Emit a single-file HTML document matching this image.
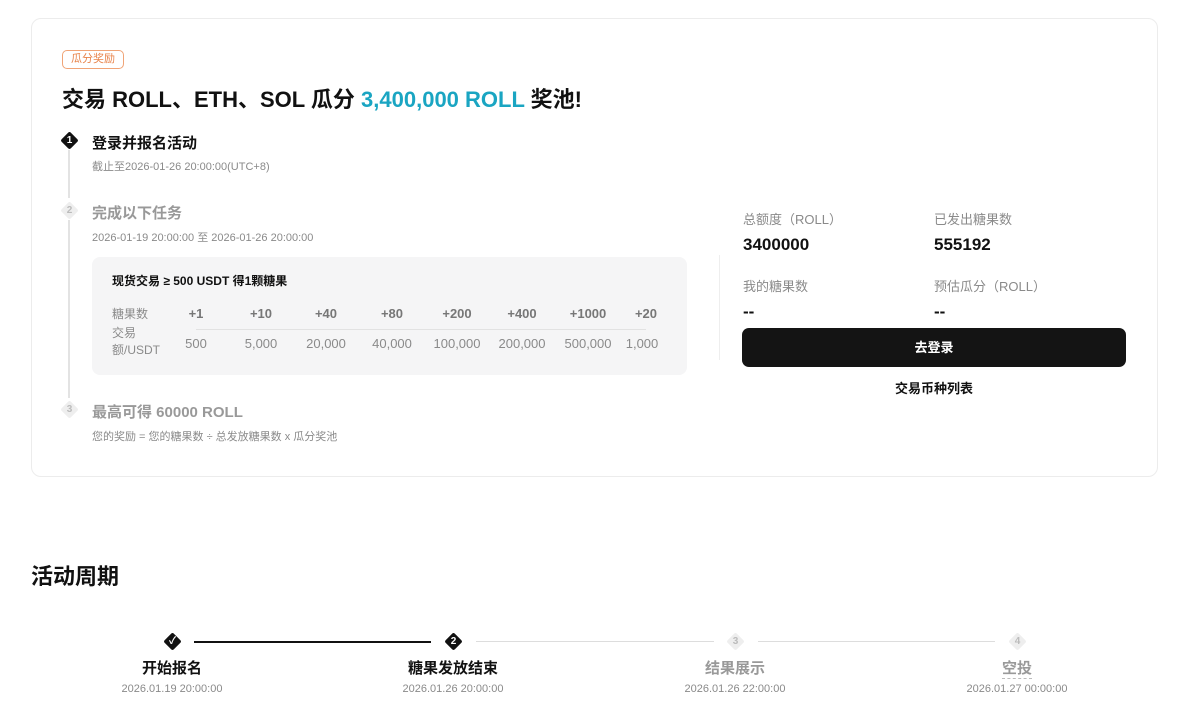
<!DOCTYPE html>
<html><head><meta charset="utf-8"><style>
*{margin:0;padding:0;box-sizing:border-box}
body{width:1199px;height:727px;background:#fff;position:relative;overflow:hidden;font-family:"Liberation Sans","Noto Sans CJK SC",sans-serif;color:#111}
.a{position:absolute;white-space:nowrap}
.card{position:absolute;left:31px;top:18px;width:1127px;height:459px;border:1px solid #ececec;border-radius:10px}
.g{color:#8a8a8a}
.dia{position:absolute;width:13px;height:13px;transform:rotate(45deg);border-radius:2px}
.dn{position:absolute;width:13px;height:13px;color:#fff;font-size:10px;font-weight:bold;text-align:center;line-height:13px}
.c{transform:translateX(-50%)}
</style></head><body>
<div class="card"></div>
<div class="a" style="left:62px;top:50px;height:19px;width:62px;border:1px solid #f0a477;border-radius:5px;color:#e8834a;font-size:11px;line-height:17px;text-align:center">瓜分奖励</div>
<div class="a" style="left:62px;top:82px;font-size:22px;font-weight:bold">交易 ROLL、ETH、SOL 瓜分 <span style="color:#1aa5c2">3,400,000 ROLL</span> 奖池!</div>

<div style="position:absolute;left:68px;top:150px;width:2px;height:48px;background:#e3e3e3"></div>
<div style="position:absolute;left:68px;top:220px;width:2px;height:178px;background:#e3e3e3"></div>
<div class="dia" style="left:63px;top:134px;background:#111"></div><div class="dn" style="left:63px;top:134px">1</div>
<div class="dia" style="left:63px;top:204px;background:#eee"></div><div class="dn" style="left:63px;top:204px;color:#bbb">2</div>
<div class="dia" style="left:63px;top:403px;background:#eee"></div><div class="dn" style="left:63px;top:403px;color:#bbb">3</div>

<div class="a" style="left:92px;top:132px;font-size:15px;font-weight:bold">登录并报名活动</div>
<div class="a g" style="left:92px;top:158px;font-size:11px">截止至2026-01-26 20:00:00(UTC+8)</div>
<div class="a" style="left:92px;top:202px;font-size:15px;font-weight:bold;color:#999">完成以下任务</div>
<div class="a g" style="left:92px;top:229px;font-size:11px">2026-01-19 20:00:00 至 2026-01-26 20:00:00</div>

<div style="position:absolute;left:92px;top:257px;width:595px;height:118px;background:#f5f5f6;border-radius:8px"></div>
<div class="a" style="left:112px;top:272px;font-size:12px;font-weight:bold">现货交易 ≥ 500 USDT 得1颗糖果</div>
<div class="a g" style="left:112px;top:305px;font-size:12px">糖果数</div>
<div class="a g" style="left:112px;top:325px;font-size:12px;line-height:17px;white-space:normal;width:50px">交易<br>额/USDT</div>
<div style="position:absolute;left:196px;top:329px;width:450px;height:1px;background:#e2e2e2"></div>
<div class="a g c" style="left:196px;top:306px;font-size:13px;font-weight:bold;color:#777">+1</div>
<div class="a g c" style="left:261px;top:306px;font-size:13px;font-weight:bold;color:#777">+10</div>
<div class="a g c" style="left:326px;top:306px;font-size:13px;font-weight:bold;color:#777">+40</div>
<div class="a g c" style="left:392px;top:306px;font-size:13px;font-weight:bold;color:#777">+80</div>
<div class="a g c" style="left:457px;top:306px;font-size:13px;font-weight:bold;color:#777">+200</div>
<div class="a g c" style="left:522px;top:306px;font-size:13px;font-weight:bold;color:#777">+400</div>
<div class="a g c" style="left:588px;top:306px;font-size:13px;font-weight:bold;color:#777">+1000</div>
<div class="a g c" style="left:646px;top:306px;font-size:13px;font-weight:bold;color:#777">+20</div>
<div class="a g c" style="left:196px;top:336px;font-size:13px">500</div>
<div class="a g c" style="left:261px;top:336px;font-size:13px">5,000</div>
<div class="a g c" style="left:326px;top:336px;font-size:13px">20,000</div>
<div class="a g c" style="left:392px;top:336px;font-size:13px">40,000</div>
<div class="a g c" style="left:457px;top:336px;font-size:13px">100,000</div>
<div class="a g c" style="left:522px;top:336px;font-size:13px">200,000</div>
<div class="a g c" style="left:588px;top:336px;font-size:13px">500,000</div>
<div class="a g c" style="left:642px;top:336px;font-size:13px">1,000</div>

<div class="a" style="left:92px;top:401px;font-size:15px;font-weight:bold;color:#999">最高可得 60000 ROLL</div>
<div class="a g" style="left:92px;top:428px;font-size:11px">您的奖励 = 您的糖果数 ÷ 总发放糖果数 x 瓜分奖池</div>

<div style="position:absolute;left:719px;top:255px;width:1px;height:105px;background:#eee"></div>
<div class="a g" style="left:743px;top:209px;font-size:13px">总额度（ROLL）</div>
<div class="a g" style="left:934px;top:209px;font-size:13px">已发出糖果数</div>
<div class="a" style="left:743px;top:235px;font-size:17px;font-weight:bold">3400000</div>
<div class="a" style="left:934px;top:235px;font-size:17px;font-weight:bold">555192</div>
<div class="a g" style="left:743px;top:276px;font-size:13px">我的糖果数</div>
<div class="a g" style="left:934px;top:276px;font-size:13px">预估瓜分（ROLL）</div>
<div class="a" style="left:743px;top:302px;font-size:17px;font-weight:bold">--</div>
<div class="a" style="left:934px;top:302px;font-size:17px;font-weight:bold">--</div>
<div style="position:absolute;left:742px;top:328px;width:384px;height:39px;background:#141414;border-radius:7px;color:#fff;font-size:13px;font-weight:bold;text-align:center;line-height:39px">去登录</div>
<div class="a c" style="left:934px;top:378px;font-size:13px;font-weight:bold">交易币种列表</div>

<div class="a" style="left:31px;top:559px;font-size:22px;font-weight:bold">活动周期</div>
<div style="position:absolute;left:194px;top:641px;width:237px;height:2px;background:#111"></div>
<div style="position:absolute;left:476px;top:641px;width:238px;height:1px;background:#ddd"></div>
<div style="position:absolute;left:758px;top:641px;width:237px;height:1px;background:#ddd"></div>
<div class="dia" style="left:166px;top:635px;background:#111"></div><div class="dn" style="left:166px;top:635px">✓</div>
<div class="dia" style="left:447px;top:635px;background:#111"></div><div class="dn" style="left:447px;top:635px">2</div>
<div class="dia" style="left:729px;top:635px;background:#eee"></div><div class="dn" style="left:729px;top:635px;color:#bbb">3</div>
<div class="dia" style="left:1011px;top:635px;background:#eee"></div><div class="dn" style="left:1011px;top:635px;color:#bbb">4</div>
<div class="a c" style="left:172px;top:657px;font-size:15px;font-weight:bold">开始报名</div>
<div class="a c" style="left:453px;top:657px;font-size:15px;font-weight:bold">糖果发放结束</div>
<div class="a c" style="left:735px;top:657px;font-size:15px;font-weight:bold;color:#999">结果展示</div>
<div class="a c" style="left:1017px;top:657px;font-size:15px;font-weight:bold;color:#999;border-bottom:1px dashed #bbb">空投</div>
<div class="a g c" style="left:172px;top:683px;font-size:11px">2026.01.19 20:00:00</div>
<div class="a g c" style="left:453px;top:683px;font-size:11px">2026.01.26 20:00:00</div>
<div class="a g c" style="left:735px;top:683px;font-size:11px">2026.01.26 22:00:00</div>
<div class="a g c" style="left:1017px;top:683px;font-size:11px">2026.01.27 00:00:00</div>
</body></html>
